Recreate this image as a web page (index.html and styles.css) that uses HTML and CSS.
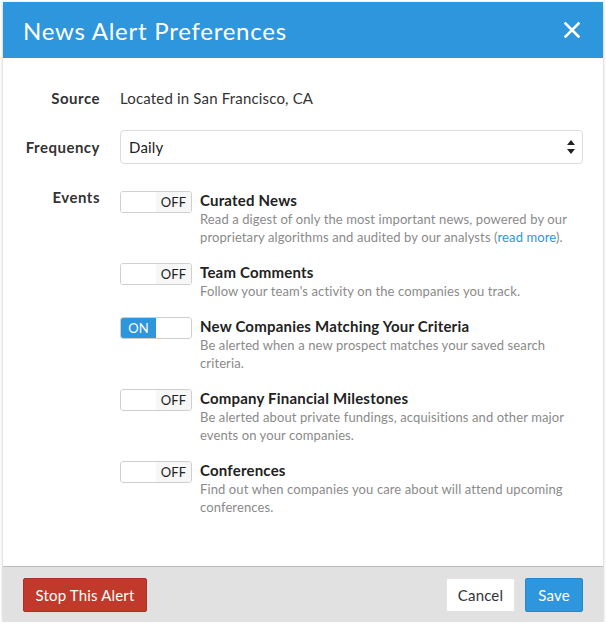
FILE: index.html
```html
<!DOCTYPE html>
<html>
<head>
<meta charset="utf-8">
<link rel="stylesheet" href="styles.css">
</head>
<body>
<div class="modal">
  <div class="modal-header">
    <h1 class="modal-title">News Alert Preferences</h1>
    <button class="close" aria-label="Close">
      <svg width="16" height="16" viewBox="0 0 16 16"><path d="M1.5 1.5 L14.5 14.5 M14.5 1.5 L1.5 14.5" stroke="#fff" stroke-width="2.6" stroke-linecap="square" fill="none"/></svg>
    </button>
  </div>
  <div class="modal-body">
    <div class="row row-source">
      <div class="label">Source</div>
      <div class="value">Located in San Francisco, CA</div>
    </div>
    <div class="row row-freq">
      <div class="label">Frequency</div>
      <div class="select">
        <span>Daily</span>
        <svg class="arrows" width="8" height="14" viewBox="0 0 8 14"><path d="M4 0 L8 5 L0 5 Z M0 9 L8 9 L4 14 Z" fill="#222"/></svg>
      </div>
    </div>
    <div class="row row-events">
      <div class="label label-events">Events</div>
      <div class="events">
        <div class="event">
          <div class="toggle off"><span class="half"></span><span class="half state">OFF</span></div>
          <div class="event-text">
            <div class="event-title">Curated News</div>
            <div class="event-desc">Read a digest of only the most important news, powered by our proprietary algorithms and audited by our analysts (<a href="#">read more</a>).</div>
          </div>
        </div>
        <div class="event">
          <div class="toggle off"><span class="half"></span><span class="half state">OFF</span></div>
          <div class="event-text">
            <div class="event-title">Team Comments</div>
            <div class="event-desc">Follow your team's activity on the companies you track.</div>
          </div>
        </div>
        <div class="event">
          <div class="toggle on"><span class="half state">ON</span><span class="half"></span></div>
          <div class="event-text">
            <div class="event-title">New Companies Matching Your Criteria</div>
            <div class="event-desc">Be alerted when a new prospect matches your saved search criteria.</div>
          </div>
        </div>
        <div class="event">
          <div class="toggle off"><span class="half"></span><span class="half state">OFF</span></div>
          <div class="event-text">
            <div class="event-title">Company Financial Milestones</div>
            <div class="event-desc">Be alerted about private fundings, acquisitions and other major events on your companies.</div>
          </div>
        </div>
        <div class="event">
          <div class="toggle off"><span class="half"></span><span class="half state">OFF</span></div>
          <div class="event-text">
            <div class="event-title">Conferences</div>
            <div class="event-desc">Find out when companies you care about will attend upcoming conferences.</div>
          </div>
        </div>
      </div>
    </div>
  </div>
  <div class="modal-footer">
    <button class="btn btn-danger">Stop This Alert</button>
    <div class="spacer"></div>
    <button class="btn btn-default">Cancel</button>
    <button class="btn btn-primary">Save</button>
  </div>
</div>
</body>
</html>
```
FILE: styles.css
```css
* { box-sizing: border-box; }
html, body { margin: 0; background: #fff; }
body {
  padding: 2px 3px 0 3px;
  font-family: Lato, "Open Sans", sans-serif;
  color: #333;
}
.modal {
  width: 600px;
  height: 620px;
  display: flex;
  flex-direction: column;
  background: #fff;
  box-shadow: 0 1px 3px rgba(0,0,0,0.28);
}
.modal-header {
  height: 56px;
  background: #2e96dd;
  display: flex;
  align-items: center;
  justify-content: space-between;
  padding: 0 23px 0 20px;
}
.modal-title {
  margin: 0;
  font-size: 24px;
  font-weight: 400;
  letter-spacing: 0.75px;
  color: #fff;
  line-height: 28px;
  padding-top: 2px;
}
.close {
  background: none;
  border: 0;
  padding: 0;
  width: 16px;
  height: 16px;
  display: flex;
}
.modal-body {
  flex: 1;
  padding: 23px 20px 0 20px;
}
.row {
  display: grid;
  grid-template-columns: 77px 1fr;
  column-gap: 20px;
  align-items: center;
}
.label {
  text-align: right;
  font-weight: 700;
  font-size: 15px;
  letter-spacing: 0.5px;
  color: #333;
}
.value { font-size: 15px; letter-spacing: 0.17px; color: #333; }
.row-source { height: 34px; }
.row-freq { margin-top: 15px; }
.select {
  height: 34px;
  border: 1px solid #dcdcdc;
  border-radius: 4px;
  display: flex;
  align-items: center;
  justify-content: space-between;
  padding: 0 7px 0 8px;
  font-size: 15px;
  letter-spacing: 0.17px;
  color: #222;
}
.arrows { display: block; }
.row-events {
  margin-top: 23px;
  align-items: start;
}
.label-events { line-height: 20px; }
.events {
  display: flex;
  flex-direction: column;
  gap: 16px;
  padding-top: 3px;
}
.event {
  display: flex;
  align-items: flex-start;
  gap: 8px;
}
.toggle {
  flex: none;
  width: 72px;
  height: 22px;
  margin-top: 1px;
  border: 1px solid #cfcfcf;
  border-radius: 3px;
  display: flex;
  overflow: hidden;
  font-size: 13px;
  letter-spacing: 0.2px;
}
.toggle .half {
  width: 35px;
  display: flex;
  align-items: center;
  justify-content: center;
}
.toggle.off .half:last-child { flex: 1; background: #f7f7f7; color: #222; }
.toggle.off .half:first-child { background: #fff; }
.toggle.on .half:first-child { background: #2e96dd; color: #fff; }
.toggle.on .half:last-child { flex: 1; background: #fff; }
.event-text { flex: 1; }
.event-title {
  font-size: 15px;
  font-weight: 700;
  line-height: 20px;
  letter-spacing: 0.2px;
  color: #222;
}
.event-desc {
  font-size: 13px;
  line-height: 18px;
  letter-spacing: 0.11px;
  color: #8a8a8a;
}
.event-desc a { color: #2e96dd; text-decoration: none; }
.modal-footer {
  height: 56px;
  background: #e1e1e1;
  border-top: 1px solid #bdbdbd;
  display: flex;
  align-items: center;
  gap: 10px;
  padding: 0 20px;
}
.spacer { flex: 1; }
.btn {
  height: 34px;
  font-family: Lato, "Open Sans", sans-serif;
  font-size: 15px;
  letter-spacing: 0.17px;
  border-radius: 2px;
  padding: 0 10px;
  border: 1px solid transparent;
  cursor: pointer;
}
.btn-danger { background: #c0392b; border-color: #a93226; color: #fff; width: 124px; }
.btn-default { background: #fff; border-color: #e4e4e4; color: #333; width: 69px; }
.btn-primary { background: #2e96dd; border-color: #2a88c8; color: #fff; width: 58px; }
```
